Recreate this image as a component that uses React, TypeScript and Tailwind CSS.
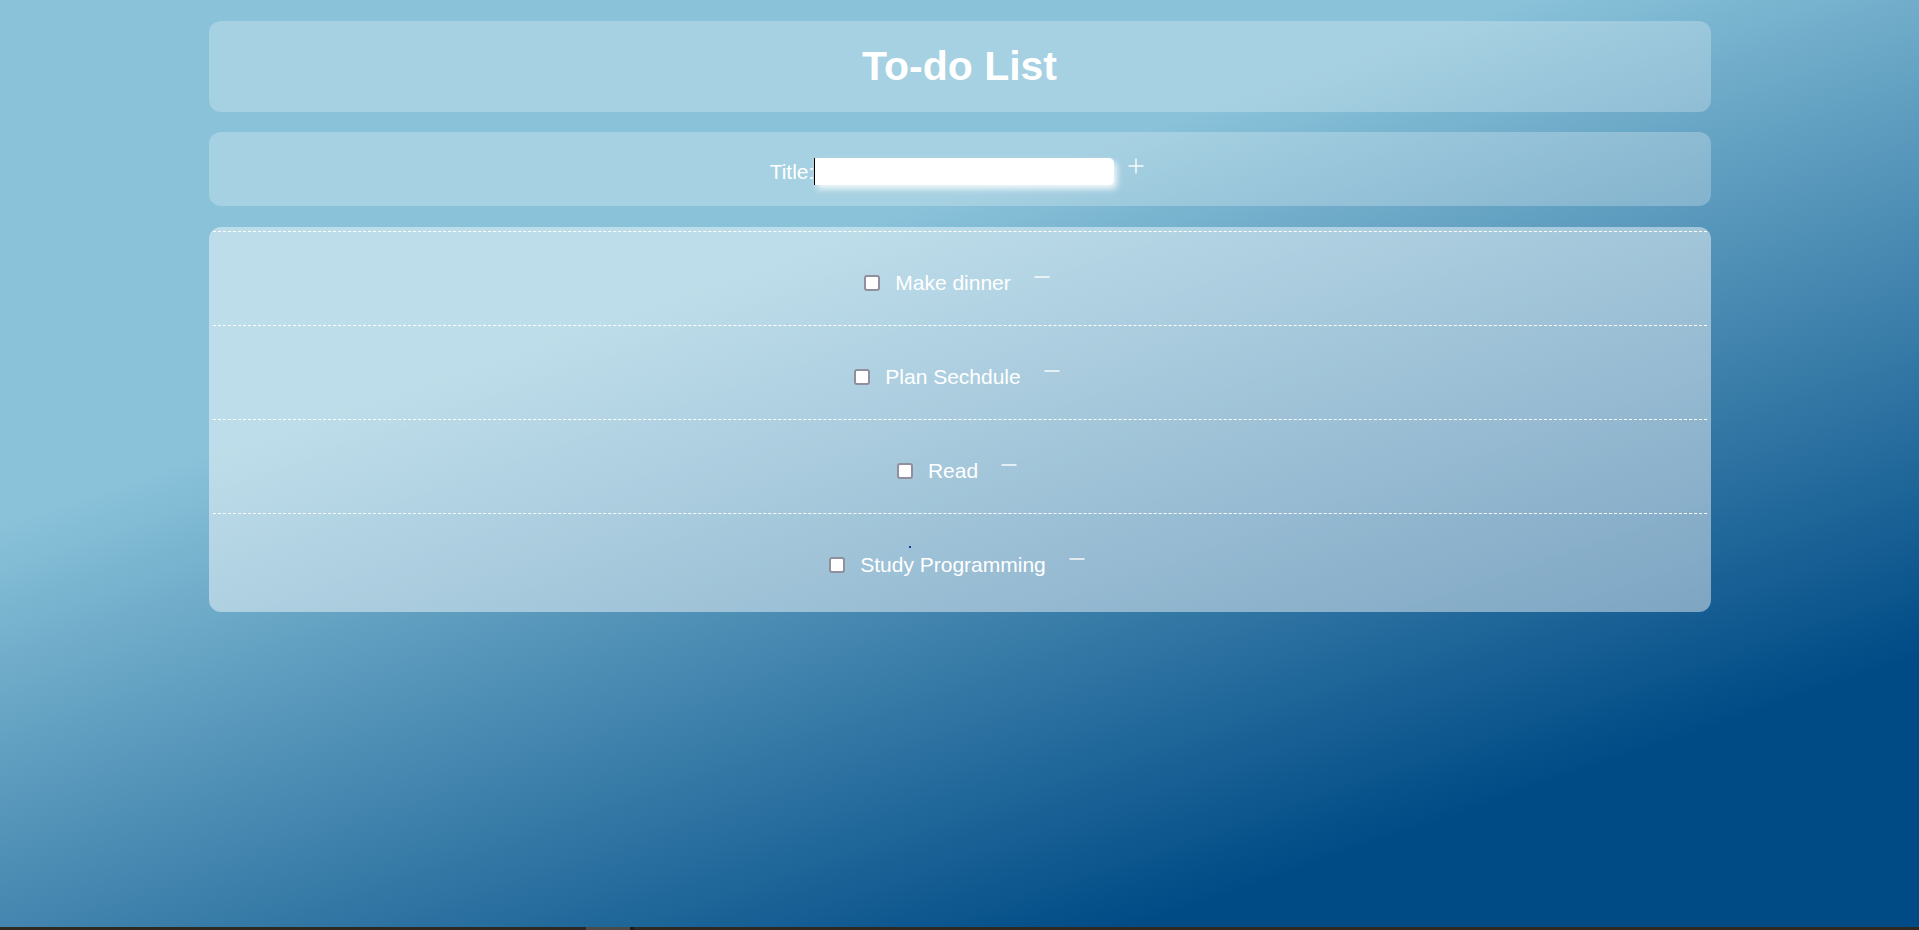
import { useState } from "react";

type Todo = { id: number; title: string; done: boolean };

const initialTodos: Todo[] = [
  { id: 1, title: "Make dinner", done: false },
  { id: 2, title: "Plan Sechdule", done: false },
  { id: 3, title: "Read", done: false },
  { id: 4, title: "Study Programming", done: false },
];

function PlusIcon() {
  return (
    <svg width="16" height="16" viewBox="0 0 16 16" className="block">
      <line x1="8" y1="0.5" x2="8" y2="15.5" stroke="white" strokeWidth="1.4" />
      <line x1="0.5" y1="8" x2="15.5" y2="8" stroke="white" strokeWidth="1.4" />
    </svg>
  );
}

function MinusIcon() {
  return (
    <svg width="16" height="16" viewBox="0 0 16 16" className="block">
      <line x1="0.5" y1="2" x2="15.5" y2="2" stroke="white" strokeWidth="1.4" />
    </svg>
  );
}

export default function App() {
  const [todos, setTodos] = useState<Todo[]>(initialTodos);
  const [title, setTitle] = useState("");

  const addTodo = () => {
    if (!title.trim()) return;
    setTodos([...todos, { id: Date.now(), title: title.trim(), done: false }]);
    setTitle("");
  };

  const toggle = (id: number) =>
    setTodos(todos.map((t) => (t.id === id ? { ...t, done: !t.done } : t)));

  const remove = (id: number) => setTodos(todos.filter((t) => t.id !== id));

  return (
    <div className="h-screen flex flex-col font-['Liberation_Sans',Arial,sans-serif] text-white">
      <main className="flex-1 bg-[linear-gradient(161deg,#89c2d9_33%,#004b86_83%)] pt-[21px]">
        {/* Header */}
        <header className="w-[1502px] mx-auto h-[91px] rounded-xl bg-white/25 flex items-center justify-center">
          <h1 className="text-[41px] font-bold leading-none">To-do List</h1>
        </header>

        {/* New item */}
        <section className="w-[1502px] mx-auto mt-[20px] h-[74px] rounded-xl bg-white/25 flex items-center justify-center pt-[5px]">
          <label className="text-[21px] leading-[24px]" htmlFor="title">
            Title:
          </label>
          <input
            id="title"
            value={title}
            onChange={(e) => setTitle(e.target.value)}
            className="w-[300px] h-[27px] bg-white rounded-r-[5px] border-l border-black outline-none px-1 text-black text-[16px] shadow-[3px_4px_6px_rgba(255,255,255,0.85)]"
          />
          <button
            onClick={addTodo}
            className="self-start mt-[21px] ml-[14px] pr-[5px] cursor-pointer"
          >
            <PlusIcon />
          </button>
        </section>

        {/* List */}
        <ul className="relative w-[1502px] mx-auto mt-[21px] rounded-xl bg-white/45 px-1 pt-1 pb-[5px]">
          {todos.map((t) => (
            <li
              key={t.id}
              className="h-[94px] border-t border-dashed border-white flex items-center justify-center pt-2"
            >
              <button
                onClick={() => toggle(t.id)}
                className="w-4 h-4 rounded-[3px] border-2 border-[#8f8f9d] bg-white flex items-center justify-center"
              >
                {t.done && <span className="w-2 h-2 bg-[#0060df] rounded-[1px]" />}
              </button>
              <span
                className={
                  "ml-[15px] text-[21px] leading-[24px] " + (t.done ? "line-through" : "")
                }
              >
                {t.title}
              </span>
              <button
                onClick={() => remove(t.id)}
                className="ml-[23px] pr-[5px] cursor-pointer"
              >
                <MinusIcon />
              </button>
            </li>
          ))}
          <span className="absolute left-[700px] top-[319px] w-[2px] h-[2px] bg-[#1b3a9a]" />
        </ul>
      </main>
      <div className="h-[3px] flex bg-[#2e2a23]">
        <div className="w-[586px]" />
        <div className="w-[44px] bg-[#4b4b4b]" />
        <div className="w-[4px] bg-[#1c1c1c]" />
      </div>
    </div>
  );
}
